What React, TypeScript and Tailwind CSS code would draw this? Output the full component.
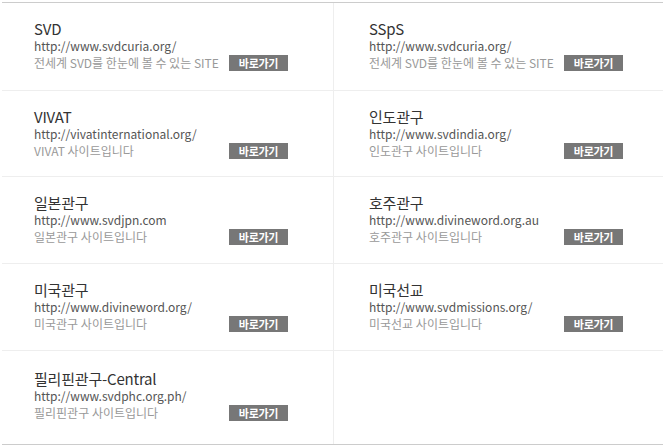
const sites = [
  { title: 'SVD', url: 'http://www.svdcuria.org/', desc: '전세계 SVD를 한눈에 볼 수 있는 SITE' },
  { title: 'SSpS', url: 'http://www.svdcuria.org/', desc: '전세계 SVD를 한눈에 볼 수 있는 SITE' },
  { title: 'VIVAT', url: 'http://vivatinternational.org/', desc: 'VIVAT 사이트입니다' },
  { title: '인도관구', url: 'http://www.svdindia.org/', desc: '인도관구 사이트입니다' },
  { title: '일본관구', url: 'http://www.svdjpn.com', desc: '일본관구 사이트입니다' },
  { title: '호주관구', url: 'http://www.divineword.org.au', desc: '호주관구 사이트입니다' },
  { title: '미국관구', url: 'http://www.divineword.org/', desc: '미국관구 사이트입니다' },
  { title: '미국선교', url: 'http://www.svdmissions.org/', desc: '미국선교 사이트입니다' },
  { title: '필리핀관구-Central', url: 'http://www.svdphc.org.ph/', desc: '필리핀관구 사이트입니다' },
]

// row heights incl. the 1px divider under each row
const rowHeights = ['h-[88px]', 'h-[86px]', 'h-[87px]', 'h-[87px]', 'h-[93px]']

export default function App() {
  const rows = [0, 1, 2, 3, 4].map((r) => [sites[r * 2], sites[r * 2 + 1]])

  return (
    <div
      className="mx-[2px] mt-[2px] w-[661px] border-y border-[#cccccc] bg-white"
      style={{ fontFamily: '"Noto Sans CJK KR", "Noto Sans", sans-serif' }}
    >
      {rows.map((pair, r) => {
        const last = r === rows.length - 1
        return (
          <div
            key={r}
            className={`grid grid-cols-[332px_1fr] ${rowHeights[r]} ${last ? '' : 'border-b border-[#eeeeee]'}`}
          >
            <Cell site={pair[0]} className="border-r border-[#eeeeee] pl-[32px]" last={last} />
            <Cell site={pair[1]} className="pl-[35px]" last={last} />
          </div>
        )
      })}
    </div>
  )
}

function Cell({ site, className, last }: { site?: { title: string; url: string; desc: string }; className: string; last: boolean }) {
  return (
    <div className={`${className} ${last ? 'pt-[19px]' : 'pt-[17px]'}`}>
      {site && (
        <>
          <div className="text-[15px] leading-[18px] tracking-[-0.2px] text-[#333333]">{site.title}</div>
          <div className="text-[12px] leading-[15px] text-[#555555]">{site.url}</div>
          <div className="mt-[2px] flex h-[16px] items-center">
            <span className="w-[195px] text-[12px] leading-[16px] text-[#999999]">{site.desc}</span>
            <a
              href="#"
              className="flex h-[16px] w-[59px] items-center justify-center bg-[#777777] text-[11px] font-bold leading-none tracking-[-0.3px] text-white"
            >
              바로가기
            </a>
          </div>
        </>
      )}
    </div>
  )
}
